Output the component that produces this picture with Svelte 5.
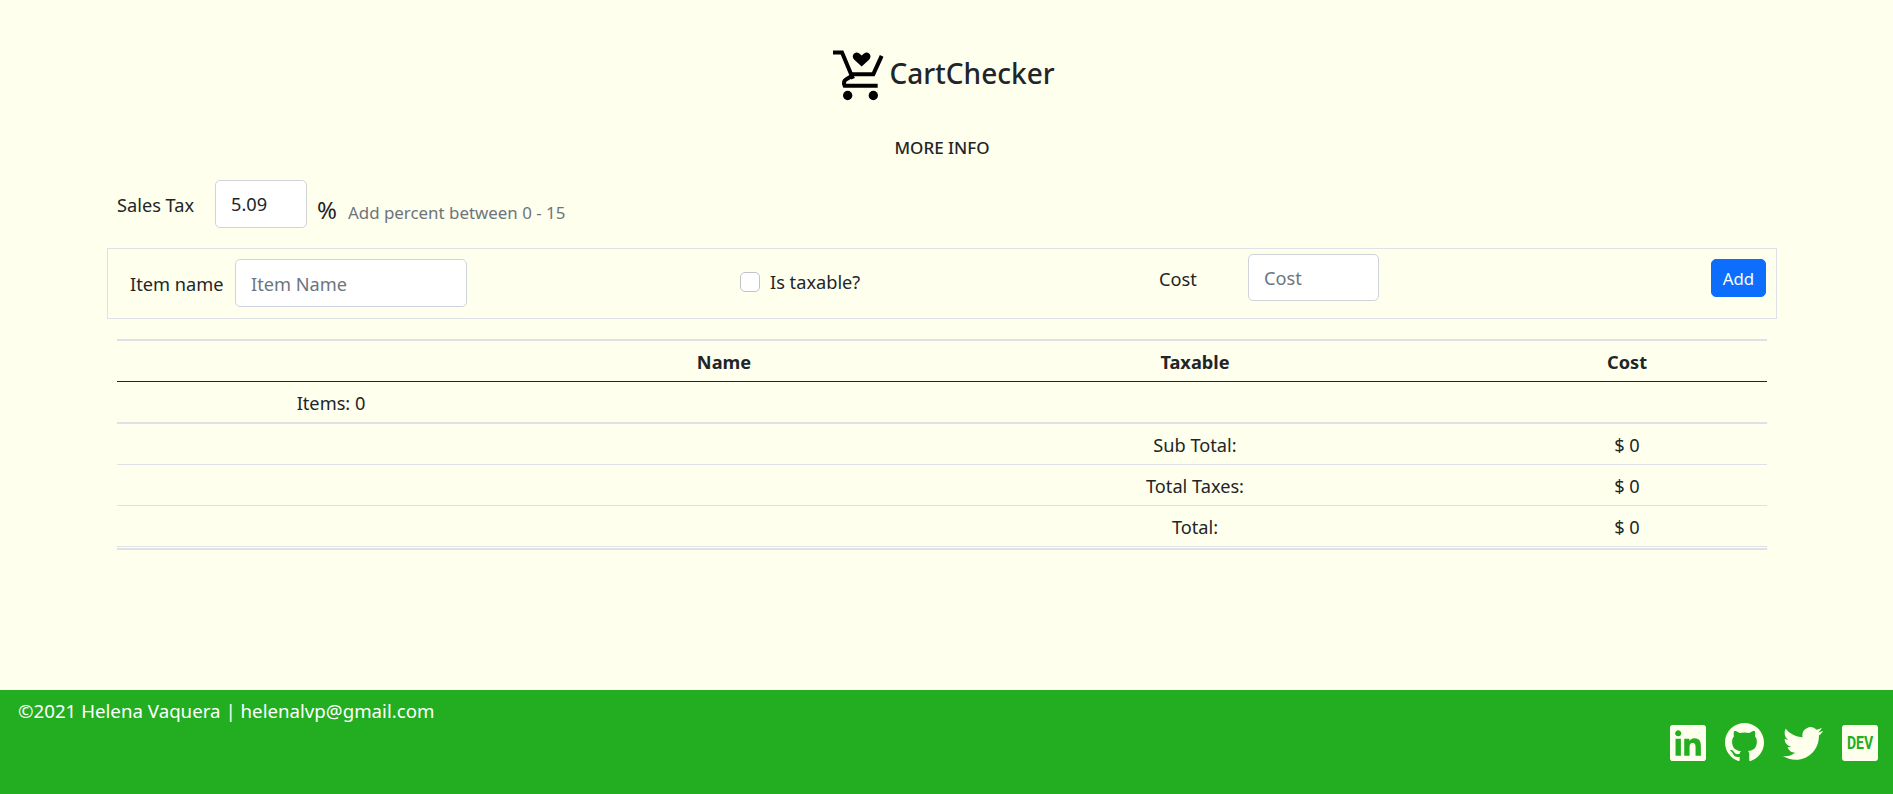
<script lang="ts">
    const rows = [
        {label: "Sub Total:", value: "$ 0"},
        {label: "Total Taxes:", value: "$ 0"},
        {label: "Total:", value: "$ 0"},
    ];
</script>

<div class="page">
    <main>
        <header class="brand">
            <svg class="cart" viewBox="150 50 180 170" aria-hidden="true">
                <path class="line" d="M162 66H189L222 145" />
                <path class="line" d="M212 131H283L308 76" />
                <path class="line" d="M222 134L202 146Q191 152 197 166H296" />
                <circle cx="206" cy="195" r="14" />
                <circle cx="283" cy="195" r="14" />
                <path d="M248 108L226 88C214 76 228 60 241 69L248 75L255 69C268 60 282 76 270 88Z" />
            </svg>
            <h1>CartChecker</h1>
        </header>

        <div class="more">MORE INFO</div>

        <div class="tax">
            <label for="tax">Sales Tax</label>
            <input id="tax" class="field tax-input" type="text" value="5.09" />
            <span class="percent">%</span>
            <small>Add percent between 0 - 15</small>
        </div>

        <form class="item-form" onsubmit={(e) => e.preventDefault()}>
            <div class="cell name">
                <label for="item">Item name</label>
                <input id="item" class="field item-input" type="text" placeholder="Item Name" />
            </div>
            <div class="cell taxable">
                <span class="check"></span>
                <span>Is taxable?</span>
            </div>
            <div class="cell cost">
                <label for="cost">Cost</label>
                <input id="cost" class="field cost-input" type="text" placeholder="Cost" />
            </div>
            <button type="submit">Add</button>
        </form>

        <table>
            <colgroup>
                <col class="c1" />
                <col class="c2" />
                <col class="c3" />
                <col class="c4" />
            </colgroup>
            <thead>
                <tr>
                    <th></th>
                    <th>Name</th>
                    <th>Taxable</th>
                    <th>Cost</th>
                </tr>
            </thead>
            <tbody>
                <tr class="items">
                    <td>Items: 0</td>
                    <td></td>
                    <td></td>
                    <td></td>
                </tr>
                {#each rows as row}
                    <tr>
                        <td></td>
                        <td></td>
                        <td>{row.label}</td>
                        <td>{row.value}</td>
                    </tr>
                {/each}
            </tbody>
        </table>
    </main>

    <footer>
        <p>©2021 Helena Vaquera | helenalvp@gmail.com</p>
        <div class="social">
            <svg class="linkedin" viewBox="0 32 448 448" aria-label="LinkedIn">
                <path d="M416 32H31.9C14.3 32 0 46.5 0 64.3v383.4C0 465.5 14.3 480 31.9 480H416c17.6 0 32-14.5 32-32.3V64.3c0-17.8-14.4-32.3-32-32.3zM135.4 416H69V202.2h66.5V416zm-33.2-243c-21.3 0-38.5-17.3-38.5-38.5S80.9 96 102.2 96c21.2 0 38.5 17.3 38.5 38.5 0 21.3-17.2 38.5-38.5 38.5zm282.1 243h-66.4V312c0-24.8-.5-56.7-34.5-56.7-34.6 0-39.9 27-39.9 54.9V416h-66.4V202.2h63.7v29.2h.9c8.9-16.8 30.6-34.5 62.9-34.5 67.2 0 79.7 44.3 79.7 101.9V416z" />
            </svg>
            <svg class="github" viewBox="0 0.3 24 23.4" aria-label="GitHub">
                <path d="M12 .297c-6.63 0-12 5.373-12 12 0 5.303 3.438 9.8 8.205 11.385.6.113.82-.258.82-.577 0-.285-.01-1.04-.015-2.04-3.338.724-4.042-1.61-4.042-1.61C4.422 18.07 3.633 17.7 3.633 17.7c-1.087-.744.084-.729.084-.729 1.205.084 1.838 1.236 1.838 1.236 1.07 1.835 2.809 1.305 3.495.998.108-.776.417-1.305.76-1.605-2.665-.3-5.466-1.332-5.466-5.93 0-1.31.465-2.38 1.235-3.22-.135-.303-.54-1.523.105-3.176 0 0 1.005-.322 3.3 1.23.96-.267 1.98-.399 3-.405 1.02.006 2.04.138 3 .405 2.28-1.552 3.285-1.23 3.285-1.23.645 1.653.24 2.873.12 3.176.765.84 1.23 1.91 1.23 3.22 0 4.61-2.805 5.625-5.475 5.92.42.36.81 1.096.81 2.22 0 1.606-.015 2.896-.015 3.286 0 .315.21.69.825.57C20.565 22.092 24 17.592 24 12.297c0-6.627-5.373-12-12-12" />
            </svg>
            <svg class="twitter" viewBox="0 2.2 24 19.6" aria-label="Twitter">
                <path d="M23.953 4.57a10 10 0 01-2.825.775 4.958 4.958 0 002.163-2.723c-.951.555-2.005.959-3.127 1.184a4.92 4.92 0 00-8.384 4.482C7.69 8.095 4.067 6.13 1.64 3.162a4.822 4.822 0 00-.666 2.475c0 1.71.87 3.213 2.188 4.096a4.904 4.904 0 01-2.228-.616v.06a4.923 4.923 0 003.946 4.827 4.996 4.996 0 01-2.212.085 4.936 4.936 0 004.604 3.417 9.867 9.867 0 01-6.102 2.105c-.39 0-.779-.023-1.17-.067a13.995 13.995 0 007.557 2.209c9.053 0 13.998-7.496 13.998-13.985 0-.21 0-.42-.015-.63A9.935 9.935 0 0024 4.59z" />
            </svg>
            <span class="dev"><span>DEV</span></span>
        </div>
    </footer>
</div>

<style>
:global(body) {
    margin: 0;
    background: #ffffee;
    color: #212529;
    font-family: "Noto Sans", "Open Sans", sans-serif;
    font-size: 18.2px;
}

.page {
    display: flex;
    flex-direction: column;
    height: 794px;
    overflow: hidden;
}

main {
    flex: 1;
    box-sizing: border-box;
    padding: 47px 116px 0 107px;
}

.brand {
    display: flex;
    justify-content: center;
    align-items: center;
    height: 57px;
}

.cart {
    width: 60px;
    height: 57px;
}

.cart .line {
    fill: none;
    stroke: #000;
    stroke-width: 12;
}

h1 {
    margin: 0 0 5px;
    font-size: 28px;
    font-weight: 500;
    line-height: 38px;
}

.more {
    margin-top: 32px;
    text-align: center;
    font-size: 17px;
    font-weight: 500;
    line-height: 24px;
}

.tax {
    display: flex;
    align-items: flex-start;
    margin-top: 20px;
    padding-left: 10px;
    height: 48px;
}

.tax label {
    width: 98px;
    line-height: 48px;
    padding-top: 1px;
}

.field {
    box-sizing: border-box;
    border: 1px solid #ced4da;
    border-radius: 5px;
    background: #fff;
    color: #212529;
    font: inherit;
    padding: 0 15px;
    outline: none;
}

.field::placeholder {
    color: #6c757d;
    opacity: 1;
}

.tax-input {
    width: 92px;
    height: 48px;
}

.percent {
    margin-left: 10px;
    font-size: 24px;
    line-height: 60px;
}

small {
    margin-left: 11px;
    font-size: 16.9px;
    line-height: 66px;
    color: #6c757d;
}

.item-form {
    display: flex;
    box-sizing: border-box;
    height: 71px;
    margin-top: 20px;
    border: 1px solid #dee2e6;
}

.cell {
    display: flex;
    align-items: center;
}

.name {
    width: 632px;
    height: 48px;
    margin-top: 10px;
    padding-left: 22px;
    box-sizing: border-box;
}

.name label {
    width: 105px;
    padding-top: 2px;
}

.item-input {
    width: 232px;
    height: 48px;
    padding-top: 2px;
}

.taxable {
    width: 419px;
    height: 24px;
    margin-top: 21px;
    gap: 10px;
}

.check {
    box-sizing: border-box;
    width: 20px;
    height: 20px;
    background: #fff;
    border: 1px solid #bfc4c9;
    border-radius: 5px;
}

.cost {
    width: 552px;
    height: 47px;
    margin-top: 5px;
}

.cost label {
    width: 89px;
    padding-top: 2px;
}

.cost-input {
    width: 131px;
    height: 47px;
}

button {
    width: 55px;
    height: 38px;
    margin-top: 10px;
    padding: 0;
    border: 1px solid #0d6efd;
    border-radius: 5px;
    background: #0d6efd;
    color: #fff;
    font: inherit;
    font-size: 16.8px;
}

table {
    table-layout: fixed;
    border-collapse: separate;
    border-spacing: 0;
    width: 1650px;
    margin: 20px 0 0 10px;
    padding-bottom: 1px;
    border-top: 2px solid #dee2e6;
    border-bottom: 2px solid #dee2e6;
}

.c1 { width: 428px; }
.c2 { width: 358px; }
.c3 { width: 584px; }
.c4 { width: 280px; }

th, td {
    box-sizing: border-box;
    height: 41px;
    padding: 2px 8px 0;
    text-align: center;
    line-height: 24px;
    font-weight: 400;
    border-bottom: 1px solid #dee2e6;
}

th {
    font-weight: 700;
    border-bottom: 1px solid #212529;
}

.items td {
    height: 42px;
    border-bottom-width: 2px;
}

footer {
    display: flex;
    justify-content: space-between;
    height: 104px;
    flex-shrink: 0;
    background: #22ae20;
    color: #fff;
}

footer p {
    margin: 7px 0 0 18px;
    font-size: 18.7px;
    line-height: 27px;
}

.social {
    display: flex;
    align-items: flex-start;
    margin-top: 35px;
    margin-right: 15px;
}

.social svg {
    fill: #ffffee;
    display: block;
}

.linkedin {
    width: 36px;
    height: 36px;
}

.github {
    width: 39px;
    height: 38px;
    margin: -2px 0 0 19px;
}

.twitter {
    width: 40px;
    height: 33px;
    margin: 2px 0 0 19px;
}

.dev {
    display: block;
    width: 36px;
    height: 36px;
    margin-left: 19px;
    border-radius: 3px;
    background: #ffffee;
    color: #22ae20;
    font-family: "Roboto", sans-serif;
    font-size: 19px;
    font-weight: 700;
    line-height: 36px;
    text-align: center;
}

.dev span {
    display: block;
    transform: scaleX(0.74);
}
</style>
